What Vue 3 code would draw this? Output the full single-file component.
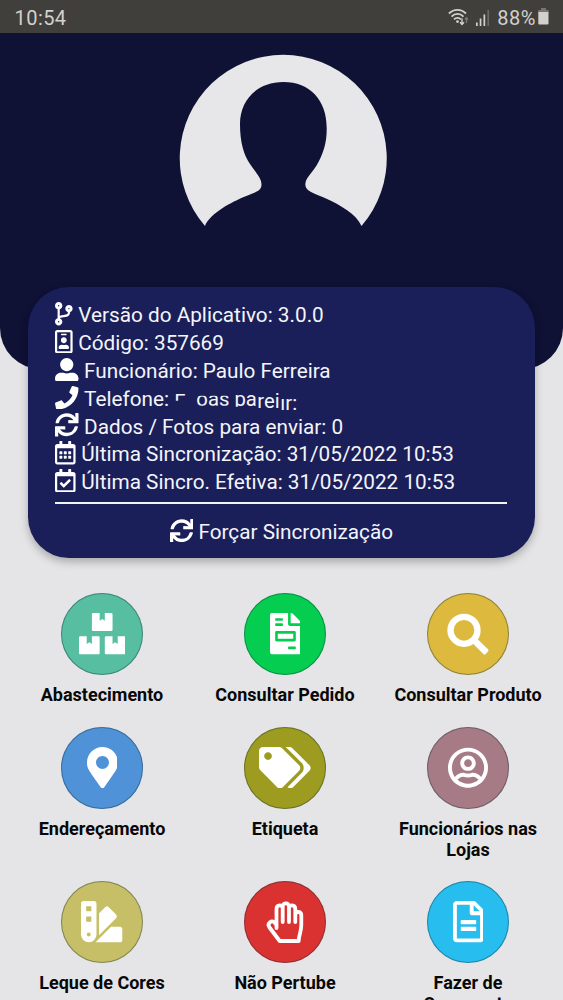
<script setup>
const glyphs = {
  branch: { w: 384, d: 'M384 144c0-44.2-35.8-80-80-80s-80 35.8-80 80c0 36.4 24.3 67.1 57.5 76.8-.6 16.1-4.2 28.5-11 36.9-15.4 19.2-49.3 22.4-85.2 25.7-28.2 2.6-57.4 5.4-81.3 16.9v-144c32.5-10.2 56-40.5 56-76.3 0-44.2-35.8-80-80-80S0 35.8 0 80c0 35.8 23.5 66.1 56 76.3v199.3C23.5 365.9 0 396.2 0 432c0 44.2 35.8 80 80 80s80-35.8 80-80c0-34-21.2-63.1-51.2-74.6 3.1-5.2 7.8-9.8 14.9-13.4 16.2-8.2 40.4-10.4 66.1-12.8 42.2-3.9 90-8.4 118.2-43.4 14-17.4 21.1-39.8 21.6-67.9 31.6-10.8 54.4-40.7 54.4-75.9zM80 64c8.800 0 16 7.200 16 16s-7.200 16-16 16-16-7.200-16-16 7.200-16 16-16zm0 384c-8.800 0-16-7.200-16-16s7.200-16 16-16 16 7.200 16 16-7.200 16-16 16zm224-320c8.800 0 16 7.200 16 16s-7.200 16-16 16-16-7.200-16-16 7.200-16 16-16z' },
  badge: { w: 384, d: 'M336 0H48C21.5 0 0 21.5 0 48v416c0 26.5 21.5 48 48 48h288c26.5 0 48-21.5 48-48V48c0-26.5-21.5-48-48-48zm0 464H48V48h288v416zM144 112h96c8.8 0 16-7.2 16-16s-7.2-16-16-16h-96c-8.8 0-16 7.2-16 16s7.2 16 16 16zm48 176c35.3 0 64-28.7 64-64s-28.7-64-64-64-64 28.7-64 64 28.7 64 64 64zm-89.6 128h179.2c12.4 0 22.4-8.6 22.4-19.2v-19.2c0-31.8-30.1-57.6-67.2-57.6-10.8 0-18.7 8-44.8 8-26.9 0-33.4-8-44.8-8-37.1 0-67.2 25.8-67.2 57.6v19.2c0 10.6 10 19.2 22.4 19.2z' },
  user: { w: 512, d: 'M256 288c79.5 0 144-64.5 144-144S335.5 0 256 0 112 64.5 112 144s64.5 144 144 144zm128 32h-55.1c-22.2 10.2-46.9 16-72.9 16s-50.6-5.8-72.9-16H128C57.3 320 0 377.3 0 448v16c0 26.5 21.5 48 48 48h416c26.5 0 48-21.5 48-48v-16c0-70.7-57.3-128-128-128z' },
  phone: { w: 512, d: 'M493.4 24.6l-104-24c-11.3-2.6-22.9 3.3-27.5 13.9l-48 112c-4.2 9.8-1.4 21.3 6.9 28l60.6 49.6c-36 76.7-98.9 140.5-177.2 177.2l-49.6-60.6c-6.8-8.3-18.2-11.1-28-6.9l-112 48C3.9 366.5-2 378.1.6 389.4l24 104C27.1 504.2 36.7 512 48 512c256.1 0 464-207.5 464-464 0-11.2-7.7-20.9-18.6-23.4z' },
  sync: { w: 512, d: 'M440.65 12.57l4 82.77A247.16 247.16 0 0 0 255.83 8C134.73 8 33.91 94.92 12.29 209.82A12 12 0 0 0 24.09 224h49.05a12 12 0 0 0 11.67-9.26 175.91 175.91 0 0 1 317-56.94l-101.46-4.86a12 12 0 0 0-12.57 12v47.41a12 12 0 0 0 12 12H500a12 12 0 0 0 12-12V12a12 12 0 0 0-12-12h-47.37a12 12 0 0 0-11.98 12.57zM255.83 432a175.61 175.61 0 0 1-146-77.8l101.8 4.87a12 12 0 0 0 12.57-12v-47.4a12 12 0 0 0-12-12H12a12 12 0 0 0-12 12V500a12 12 0 0 0 12 12h47.35a12 12 0 0 0 12-12.6l-4.15-82.57A247.17 247.17 0 0 0 255.83 504c121.11 0 221.93-86.92 243.55-201.82a12 12 0 0 0-11.8-14.18h-49.05a12 12 0 0 0-11.67 9.26A175.86 175.86 0 0 1 255.83 432z' },
  calendar: { w: 448, d: 'M148 288h-40c-6.6 0-12-5.4-12-12v-40c0-6.6 5.4-12 12-12h40c6.6 0 12 5.4 12 12v40c0 6.6-5.4 12-12 12zm108-12v-40c0-6.6-5.4-12-12-12h-40c-6.6 0-12 5.4-12 12v40c0 6.6 5.4 12 12 12h40c6.6 0 12-5.4 12-12zm96 0v-40c0-6.6-5.4-12-12-12h-40c-6.6 0-12 5.4-12 12v40c0 6.6 5.4 12 12 12h40c6.6 0 12-5.4 12-12zm-96 96v-40c0-6.6-5.4-12-12-12h-40c-6.6 0-12 5.4-12 12v40c0 6.6 5.4 12 12 12h40c6.6 0 12-5.4 12-12zm-96 0v-40c0-6.6-5.4-12-12-12h-40c-6.6 0-12 5.4-12 12v40c0 6.6 5.4 12 12 12h40c6.6 0 12-5.4 12-12zm192 0v-40c0-6.6-5.4-12-12-12h-40c-6.6 0-12 5.4-12 12v40c0 6.6 5.4 12 12 12h40c6.6 0 12-5.4 12-12zm96-260v352c0 26.5-21.5 48-48 48H48c-26.5 0-48-21.5-48-48V112c0-26.5 21.5-48 48-48h48V12c0-6.6 5.4-12 12-12h40c6.6 0 12 5.4 12 12v52h128V12c0-6.6 5.4-12 12-12h40c6.6 0 12 5.4 12 12v52h48c26.5 0 48 21.5 48 48zm-48 346V160H48v298c0 3.3 2.7 6 6 6h340c3.3 0 6-2.7 6-6z' },
  check: { w: 448, d: 'M400 64h-48V12c0-6.627-5.373-12-12-12h-40c-6.627 0-12 5.373-12 12v52H160V12c0-6.627-5.373-12-12-12h-40c-6.627 0-12 5.373-12 12v52H48C21.49 64 0 85.49 0 112v352c0 26.51 21.49 48 48 48h352c26.51 0 48-21.49 48-48V112c0-26.51-21.49-48-48-48zm-6 400H54a6 6 0 0 1-6-6V160h352v298a6 6 0 0 1-6 6zm-52.849-200.65L198.842 404.519c-4.705 4.667-12.303 4.637-16.971-.068l-75.091-75.699c-4.667-4.705-4.637-12.303.068-16.971l22.719-22.536c4.705-4.667 12.303-4.637 16.97.069l44.104 44.461 111.072-110.181c4.705-4.667 12.303-4.637 16.971.068l22.536 22.718c4.667 4.705 4.636 12.303-.069 16.97z' },
  boxes: { w: 576, d: 'M560 288h-80v96l-32-21.3-32 21.3v-96h-80c-8.8 0-16 7.2-16 16v192c0 8.8 7.2 16 16 16h224c8.8 0 16-7.2 16-16V304c0-8.8-7.2-16-16-16zm-384-64h224c8.8 0 16-7.2 16-16V16c0-8.8-7.2-16-16-16h-80v96l-32-21.3L256 96V0h-80c-8.8 0-16 7.2-16 16v192c0 8.8 7.2 16 16 16zm64 64h-80v96l-32-21.3L96 384v-96H16c-8.8 0-16 7.2-16 16v192c0 8.8 7.2 16 16 16h224c8.8 0 16-7.2 16-16V304c0-8.8-7.2-16-16-16z' },
  invoice: { w: 384, d: 'M288 256H96v64h192v-64zm89-151L279.1 7c-4.5-4.5-10.6-7-17-7H256v128h128v-6.1c0-6.3-2.5-12.4-7-16.9zm-153 31V0H24C10.7 0 0 10.7 0 24v464c0 13.3 10.7 24 24 24h336c13.3 0 24-10.7 24-24V160H248c-13.2 0-24-10.8-24-24zM64 72c0-4.42 3.58-8 8-8h80c4.42 0 8 3.58 8 8v16c0 4.42-3.58 8-8 8H72c-4.42 0-8-3.58-8-8V72zm0 64c0-4.42 3.58-8 8-8h80c4.42 0 8 3.58 8 8v16c0 4.42-3.58 8-8 8H72c-4.42 0-8-3.58-8-8v-16zm256 304c0 4.42-3.58 8-8 8h-80c-4.42 0-8-3.58-8-8v-16c0-4.42 3.58-8 8-8h80c4.42 0 8 3.58 8 8v16zm0-200v96c0 8.84-7.16 16-16 16H80c-8.84 0-16-7.16-16-16v-96c0-8.84 7.16-16 16-16h224c8.84 0 16 7.16 16 16z' },
  pin: { w: 384, d: 'M172.268 501.67C26.97 291.031 0 269.413 0 192 0 85.961 85.961 0 192 0s192 85.961 192 192c0 77.413-26.97 99.031-172.268 309.67-9.535 13.774-29.93 13.773-39.464 0zM192 272c44.183 0 80-35.817 80-80s-35.817-80-80-80-80 35.817-80 80 35.817 80 80 80z' },
  tags: { w: 640, d: 'M497.941 225.941L286.059 14.059A48 48 0 0 0 252.118 0H48C21.49 0 0 21.49 0 48v204.118a48 48 0 0 0 14.059 33.941l211.882 211.882c18.744 18.745 49.136 18.746 67.882 0l204.118-204.118c18.745-18.745 18.745-49.137 0-67.882zM112 160c-26.51 0-48-21.49-48-48s21.49-48 48-48 48 21.49 48 48-21.49 48-48 48zm513.941 133.823L421.823 497.941c-18.745 18.745-49.137 18.745-67.882 0l-.36-.36L527.64 323.522c16.999-16.999 26.36-39.6 26.36-63.64s-9.362-46.641-26.36-63.64L331.397 0h48.721a48 48 0 0 1 33.941 14.059l211.882 211.882c18.745 18.745 18.745 49.137 0 67.882z' },
  person: { w: 496, d: 'M248 104c-53 0-96 43-96 96s43 96 96 96 96-43 96-96-43-96-96-96zm0 144c-26.5 0-48-21.5-48-48s21.5-48 48-48 48 21.5 48 48-21.5 48-48 48zm0-240C111 8 0 119 0 256s111 248 248 248 248-111 248-248S385 8 248 8zm0 448c-49.7 0-95.1-18.3-130.1-48.4 14.9-23 40.4-38.6 69.6-39.5 20.8 6.4 40.6 9.6 60.5 9.6s39.7-3.1 60.5-9.6c29.2 1 54.7 16.5 69.6 39.5-35 30.1-80.4 48.4-130.1 48.4zm162.7-84.1c-24.4-31.4-62.1-51.9-105.1-51.9-10.2 0-26 9.6-57.6 9.6-31.5 0-47.4-9.6-57.6-9.6-42.9 0-80.6 20.5-105.1 51.9C61.9 339.2 48 299.2 48 256c0-110.3 89.7-200 200-200s200 89.7 200 200c0 43.2-13.9 83.2-37.3 115.9z' },
  swatch: { w: 512, d: 'M434.66 167.71L344.5 77.36a31.83 31.83 0 0 0-45-.07l-.07.07L224 152.88V424L434.66 212.9a32 32 0 0 0 0-45.19zM480 320H373.09L186.68 506.51c-2.06 2.07-4.5 3.58-6.68 5.49H480a32 32 0 0 0 32-32V352a32 32 0 0 0-32-32zM192 32a32 32 0 0 0-32-32H32A32 32 0 0 0 0 32V416a96 96 0 0 0 192 0zM96 440a24 24 0 1 1 24-24 24 24 0 0 1-24 24zm32-184H64v-64h64zm0-128H64V64h64z' },
  file: { w: 384, d: 'M288 248v28c0 6.6-5.4 12-12 12H108c-6.6 0-12-5.4-12-12v-28c0-6.6 5.4-12 12-12h168c6.6 0 12 5.4 12 12zm-12 72H108c-6.6 0-12 5.4-12 12v28c0 6.6 5.4 12 12 12h168c6.6 0 12-5.4 12-12v-28c0-6.6-5.4-12-12-12zm108-188.1V464c0 26.5-21.5 48-48 48H48c-26.5 0-48-21.5-48-48V48C0 21.5 21.5 0 48 0h204.1C264.8 0 277 5.1 286 14.1L369.9 98c9 8.9 14.1 21.2 14.1 33.9zm-128-80V128h76.1L256 51.9zM336 464V176H232c-13.3 0-24-10.7-24-24V48H48v416h288z' },
}

const info = [
  { icon: 'branch', text: 'Versão do Aplicativo: 3.0.0' },
  { icon: 'badge', text: 'Código: 357669' },
  { icon: 'user', text: 'Funcionário: Paulo Ferreira' },
  { icon: 'phone', text: 'Telefone:', masked: true },
  { icon: 'sync', text: 'Dados / Fotos para enviar: 0' },
  { icon: 'calendar', text: 'Última Sincronização: 31/05/2022 10:53' },
  { icon: 'check', text: 'Última Sincro. Efetiva: 31/05/2022 10:53' },
]

const menu = [
  { icon: 'boxes', color: 'teal', label: 'Abastecimento' },
  { icon: 'invoice', color: 'green', label: 'Consultar Pedido' },
  { icon: 'search', color: 'gold', label: 'Consultar Produto' },
  { icon: 'pin', color: 'blue', label: 'Endereçamento' },
  { icon: 'tags', color: 'olive', label: 'Etiqueta' },
  { icon: 'person', color: 'mauve', label: 'Funcionários nas Lojas' },
  { icon: 'swatch', color: 'khaki', label: 'Leque de Cores' },
  { icon: 'hand', color: 'red', label: 'Não Pertube' },
  { icon: 'file', color: 'cyan', label: 'Fazer de Orçamento' },
]
</script>

<template>
  <div class="screen">
    <header class="status">
      <span class="clock">10:54</span>
      <div class="status-right">
        <svg class="wifi" width="22" height="20" viewBox="0 0 22 20">
          <g fill="none" stroke="#d2d1cc" stroke-width="1.8">
            <path d="M.9 5.5C6 .7 13 .7 18 5.5" />
            <path d="M3.5 8.6C7 5 12 5 15.5 8.6" />
            <path d="M6 11.4C8 9.3 11 9.3 13 11.4" />
          </g>
          <circle cx="9.5" cy="13.6" r="1.4" fill="#d2d1cc" />
          <path d="M14 10.5V16M12 14.3L14 16.5L16 14.3" fill="none" stroke="#d2d1cc" stroke-width="1.4" />
          <path d="M18.5 15V10M17 11.5L18.5 9.8L20 11.5" fill="none" stroke="#7b7a76" stroke-width="1.3" />
        </svg>
        <svg class="signal" width="14" height="17" viewBox="0 0 14 17">
          <path d="M0 12.5h1.7V16H0zM3.7 8.5h1.7V16H3.7zM7.5 4.5h1.7V16H7.5z" fill="#d2d1cc" />
          <path d="M11.4 0h1.7v16h-1.7z" fill="#6c6b67" />
        </svg>
        <span class="percent">88%</span>
        <svg class="battery" width="11" height="17" viewBox="0 0 11 17">
          <path d="M3 0h5v2h2.5v3H.3V2H3z" fill="#77766f" />
          <path d="M.3 4h10.2v11.5a1 1 0 0 1-1 1H1.3a1 1 0 0 1-1-1z" fill="#d2d1cc" />
        </svg>
      </div>
    </header>

    <section class="hero">
      <svg class="avatar" width="250" height="210" viewBox="0 0 250 210">
        <path fill="#e7e6e8" d="M45 186A103.5 103.5 0 1 1 201.5 186C196.5 174 180 165 166 158.5C155 153.5 145.2 152 145.3 144.5C145.5 137 153 133 159 121C164 111 166.8 102 166.7 88C166.7 60 150 42 123.4 42C97 42 80 60 80 84C80 103 84 115 90 124C95 132 101.3 137 101.5 144.5C101.5 151 96 152 85 156.5C72 162 50 173 45 186Z" />
      </svg>
    </section>

    <section class="card">
      <div v-for="row in info" :key="row.icon" class="row">
        <svg class="glyph" :viewBox="`0 0 ${glyphs[row.icon].w} 512`"><path fill-rule="evenodd" :d="glyphs[row.icon].d" /></svg>
        <span>{{ row.text }}</span>
        <span v-if="row.masked" class="mask">
          <span class="m-top">Г</span><span class="m-word">oas</span><span class="m-pa">pa</span><span class="m-low">re</span><span class="m-mid">i</span><span class="m-end">ır:</span>
        </span>
      </div>
      <button class="force">
        <svg class="glyph" viewBox="0 0 512 512"><path :d="glyphs.sync.d" /></svg>
        <span>Forçar Sincronização</span>
      </button>
    </section>

    <main class="grid">
      <div v-for="item in menu" :key="item.label" class="tile">
        <div class="disc" :class="item.color">
          <svg v-if="item.icon === 'search'" width="82" height="82" viewBox="0 0 82 82">
            <circle cx="37" cy="37.3" r="13.5" fill="none" stroke="#fff" stroke-width="6.3" />
            <rect x="14" y="-3.3" width="18" height="6.6" rx="1.6" fill="#fff" transform="translate(37 37.3) rotate(44.5)" />
          </svg>
          <svg v-else-if="item.icon === 'hand'" width="82" height="82" viewBox="0 0 82 82" fill="none" stroke="#fff" stroke-width="3.8" stroke-linecap="round" stroke-linejoin="round">
            <path d="M32.5 47V28C32.5 23.3 38.7 23.3 38.7 27.5V41M38.7 27.5V25.5C38.7 21.3 45 21.3 45 25.5V41M45 27.5C45 23.3 51.3 23.3 51.3 28V41M51.3 34C51.3 30 57.3 30 57.3 34V44C57.3 51 54.7 54 54.7 60H35.7L25.5 46.5C22.5 42 28 38.3 31 42L32.5 44" />
          </svg>
          <svg v-else class="big" :viewBox="`0 0 ${glyphs[item.icon].w} 512`"><path fill-rule="evenodd" :d="glyphs[item.icon].d" /></svg>
        </div>
        <div class="label">{{ item.label }}</div>
      </div>
    </main>
  </div>
</template>

<style>
body { margin: 0; background: #e5e4e6; }
</style>

<style scoped>
.screen { width: 563px; height: 1000px; overflow: hidden; background: #e5e4e6; font-family: Roboto, "Liberation Sans", sans-serif; }
.status { box-sizing: border-box; height: 33px; padding: 2px 14px 0 14.5px; background: #403f3b; color: #d2d1cc; font-size: 20px; line-height: 32px; display: flex; justify-content: space-between; }
.clock { letter-spacing: .45px; }
.status-right { display: flex; align-items: flex-start; }
.wifi { margin: 6px 5px 0 0; }
.signal { margin: 8px 7px 0 0; }
.percent { margin-right: 2.2px; letter-spacing: .5px; }
.wifi { margin-right: 6px; }
.battery { margin-top: 6px; }
.hero { box-sizing: border-box; height: 336px; padding-top: 7px; padding-left: 160px; background: #0f1135; border-radius: 0 0 41px 41px; }
.avatar { display: block; }
.card { position: relative; box-sizing: border-box; width: 507px; height: 271px; margin: -82px 0 0 28px; padding: 13px 27px 0; border-radius: 41px; background: #1b1f59; color: #f4f5fb; box-shadow: 0 4px 9px rgba(0, 0, 0, .26); font-size: 20.75px; }
.row { display: flex; align-items: center; height: 27.8px; gap: 5.3px; padding-left: .3px; white-space: nowrap; }
.row > span { position: relative; top: 1.5px; }
.glyph { height: 23.5px; width: auto; flex: none; fill: #fff; display: block; }
.mask { display: flex; align-items: center; height: 27px; font-size: 20.3px; }
.mask span { display: block; line-height: 24px; }
.m-top { width: 22px; transform: translateY(3px); clip-path: inset(0 0 13px 0); }
.m-word { clip-path: inset(9px 0 5px 0); margin-right: 5px; }
.m-pa { clip-path: inset(0 0 4px 0); }
.m-low { transform: translateY(2px); margin-left: .5px; }
.m-mid { transform: translateY(1.5px); }
.m-end { transform: translateY(3.5px); margin-left: .5px; }
.force { box-sizing: border-box; width: 452px; height: 58px; margin: 7px 0 0; padding: 0 0 0 1px; border: 0; border-top: 2px solid #f0f5ee; background: none; color: inherit; font: inherit; display: flex; align-items: center; justify-content: center; gap: 5px; }
.force .glyph { margin-top: -2px; }
.grid { display: grid; grid-template-columns: repeat(3, 183px); margin: 35px 0 0 10.5px; }
.tile { display: flex; flex-direction: column; align-items: center; padding-bottom: 21.5px; }
.disc { box-sizing: border-box; width: 82px; height: 82px; border-radius: 50%; display: flex; align-items: center; justify-content: center; box-shadow: inset 0 0 0 1px rgba(20, 50, 60, .4); }
.big { height: 41.3px; width: auto; fill: #fff; }
.label { width: 150px; margin-top: 9px; text-align: center; font-size: 18px; font-weight: 700; line-height: 21px; color: #080808; }
.teal { background: #58bea2; }
.green { background: #04cd50; }
.gold { background: #ddb93d; }
.blue { background: #5092d8; }
.olive { background: #9d9c20; }
.mauve { background: #a77b85; }
.khaki { background: #c6bf67; }
.red { background: #da3131; }
.cyan { background: #27bdee; }
</style>
